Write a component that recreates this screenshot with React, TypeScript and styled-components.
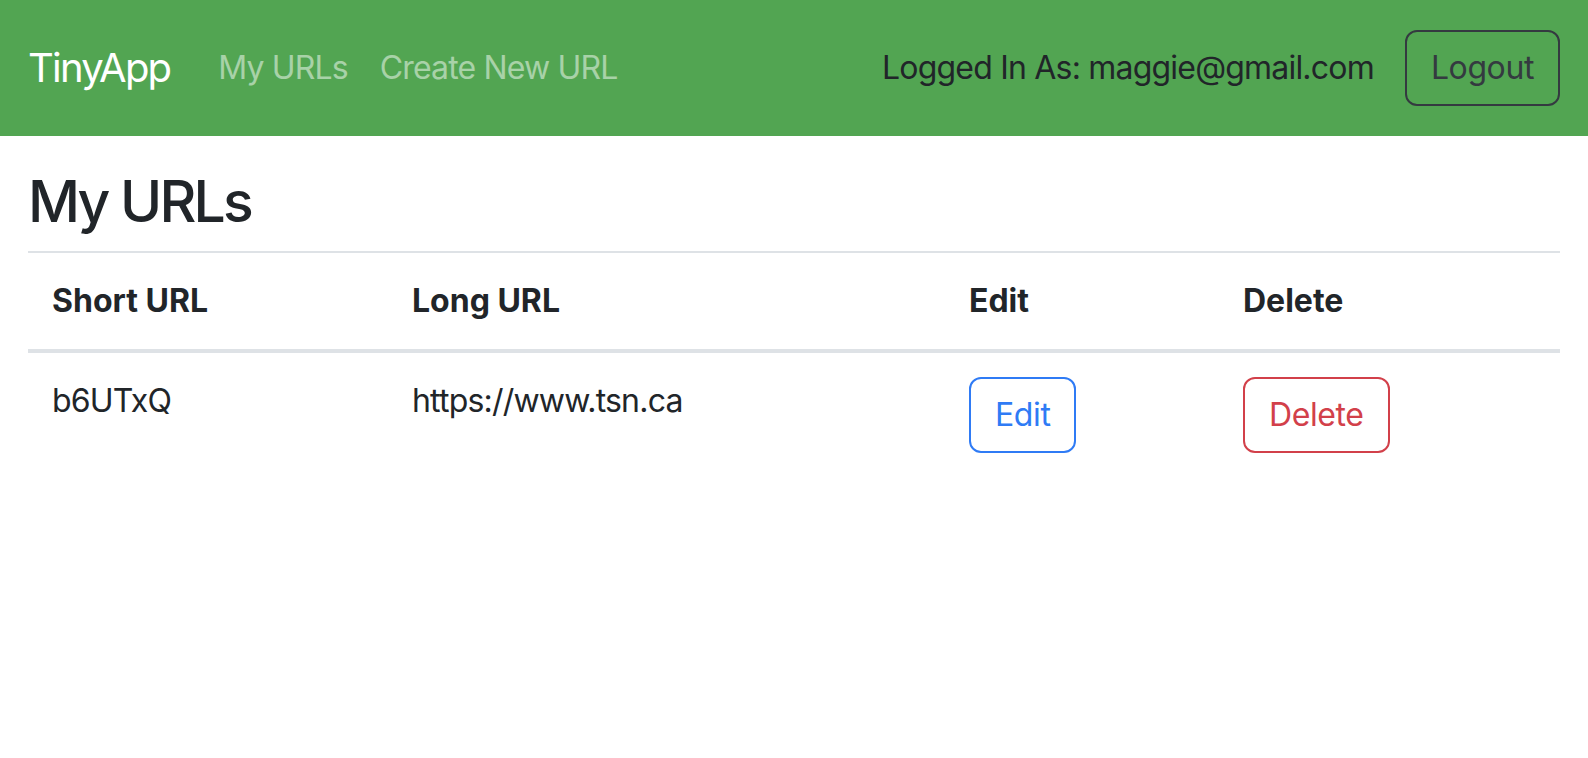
import React from "react";
import styled, { createGlobalStyle } from "styled-components";

const Global = createGlobalStyle`
  html, body { margin: 0; padding: 0; background: #fff; }
  body {
    font-family: Inter, "Noto Sans", "Liberation Sans", sans-serif;
    color: #212529;
    -webkit-font-smoothing: antialiased;
  }
  * { box-sizing: border-box; }
`;

const Navbar = styled.nav`
  height: 136px;
  background: #52a552;
  display: flex;
  align-items: center;
  padding: 0 28px 0 28px;
`;

const Brand = styled.a`
  font-size: 40px;
  line-height: 60px;
  color: #fff;
  text-decoration: none;
  margin-right: 32px;
  letter-spacing: -1.8px;
`;

const NavList = styled.div`
  display: flex;
  align-items: center;
`;

const NavLink = styled.a`
  font-size: 32px;
  line-height: 48px;
  padding: 0 16px;
  color: rgba(255, 255, 255, 0.5);
  text-decoration: none;
  letter-spacing: -0.85px;
`;

const UserArea = styled.div`
  margin-left: auto;
  display: flex;
  align-items: center;
  gap: 31px;
`;

const UserText = styled.span`
  font-size: 32px;
  line-height: 48px;
  color: #212529;
  letter-spacing: -0.8px;
`;

const OutlineButton = styled.button<{ $tone: string }>`
  font-family: inherit;
  font-size: 32px;
  line-height: 48px;
  padding: 12px 24px;
  border: 2px solid ${(p) => p.$tone};
  border-radius: 12px;
  background: transparent;
  color: ${(p) => p.$tone};
  cursor: pointer;
  letter-spacing: -0.4px;
`;

const Main = styled.main`
  padding: 32px 28px 0 28px;
`;

const Title = styled.h2`
  margin: 0 0 15px 0;
  font-size: 57px;
  line-height: 68px;
  font-weight: 500;
  color: #212529;
  letter-spacing: -2.8px;
`;

const Table = styled.table`
  width: 100%;
  border-collapse: collapse;
  table-layout: fixed;
`;

const Col = styled.col<{ $w?: number }>`
  width: ${(p) => (p.$w ? `${p.$w}px` : "auto")};
`;

const Th = styled.th`
  text-align: left;
  font-size: 32px;
  line-height: 48px;
  font-weight: 700;
  padding: 24px;
  border-top: 2px solid #dee2e6;
  border-bottom: 4px solid #dee2e6;
  letter-spacing: 0;
`;

const Td = styled.td`
  font-size: 32px;
  line-height: 48px;
  padding: 24px;
  vertical-align: top;
  letter-spacing: -0.8px;
`;

export default function App() {
  return (
    <>
      <Global />
      <Navbar>
        <Brand href="#">TinyApp</Brand>
        <NavList>
          <NavLink href="#">My URLs</NavLink>
          <NavLink href="#">Create New URL</NavLink>
        </NavList>
        <UserArea>
          <UserText>Logged In As: maggie@gmail.com</UserText>
          <OutlineButton $tone="#343a40">Logout</OutlineButton>
        </UserArea>
      </Navbar>
      <Main>
        <Title>My URLs</Title>
        <Table>
          <colgroup>
            <Col $w={360} />
            <Col $w={557} />
            <Col $w={274} />
            <Col />
          </colgroup>
          <thead>
            <tr>
              <Th>Short URL</Th>
              <Th>Long URL</Th>
              <Th>Edit</Th>
              <Th>Delete</Th>
            </tr>
          </thead>
          <tbody>
            <tr>
              <Td>b6UTxQ</Td>
              <Td>https://www.tsn.ca</Td>
              <Td>
                <OutlineButton $tone="#2f7bf5">Edit</OutlineButton>
              </Td>
              <Td>
                <OutlineButton $tone="#d2404a">Delete</OutlineButton>
              </Td>
            </tr>
          </tbody>
        </Table>
      </Main>
    </>
  );
}
